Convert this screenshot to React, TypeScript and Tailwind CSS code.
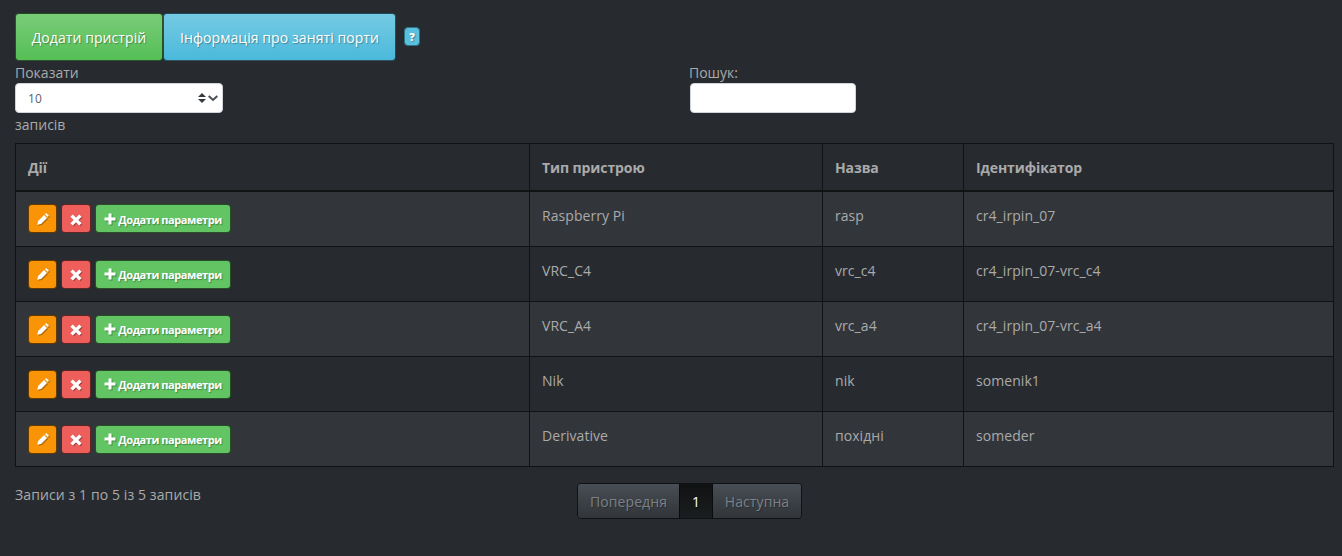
const shadow = "[text-shadow:1px_1px_1px_rgba(0,0,0,0.3)]";
const iconShadow = "[filter:drop-shadow(1px_1px_0.5px_rgba(0,0,0,0.3))]";

const rows = [
  { type: "Raspberry Pi", name: "rasp", id: "cr4_irpin_07" },
  { type: "VRC_C4", name: "vrc_c4", id: "cr4_irpin_07-vrc_c4" },
  { type: "VRC_A4", name: "vrc_a4", id: "cr4_irpin_07-vrc_a4" },
  { type: "Nik", name: "nik", id: "somenik1" },
  { type: "Derivative", name: "похідні", id: "someder" },
];

const action = "flex h-[29px] items-center justify-center rounded-[4px] border border-black/60 text-white";

function Pencil() {
  return (
    <svg width="12" height="12" viewBox="0 0 12 12" fill="currentColor" className={iconShadow}>
      <path d="M0.3 11.7 1.1 8 7.1 2 10 4.9 4 10.9ZM7.9 1.2 8.7.4Q9.2 0 9.7.4L11.6 2.3Q12 2.8 11.6 3.3L10.8 4.1Z" />
    </svg>
  );
}

function Cross() {
  return (
    <svg width="12" height="12" viewBox="0 0 12 12" fill="none" stroke="currentColor" strokeWidth="3.4" className={`mt-[2px] ${iconShadow}`}>
      <path d="M1.6 1.6 10.4 10.4M10.4 1.6 1.6 10.4" />
    </svg>
  );
}

function Plus() {
  return (
    <svg width="12" height="12" viewBox="0 0 12 12" fill="none" stroke="currentColor" strokeWidth="3" className={iconShadow}>
      <path d="M0.5 6H11.5M6 0.5V11.5" />
    </svg>
  );
}

export default function App() {
  return (
    <div className="h-[556px] w-[1342px] overflow-hidden bg-[#272b30] pl-[15px] pt-[13px] font-['Open_Sans','Noto_Sans',sans-serif] text-[14px] leading-[22px] text-[#aaaaaa]">
      <div className="flex h-12 items-center">
        <button className={`h-12 w-[148px] rounded-[4px] border border-black/60 bg-linear-to-b from-[#78cc78] to-[#55bf55] pt-px tracking-[0.08px] text-white ${shadow}`}>
          Додати пристрій
        </button>
        <button className={`h-12 w-[233px] rounded-[4px] border border-black/60 bg-linear-to-b from-[#74cae3] to-[#4ab9db] pt-px tracking-[0.08px] text-white ${shadow}`}>
          Інформація про заняті порти
        </button>
        <button className={`mb-px ml-2 h-[19px] w-4 rounded-[4px] border border-[#29778b] bg-[#5bc0de] text-[11px] font-extrabold leading-[17px] text-white ${shadow}`}>
          ?
        </button>
      </div>

      <div className="flex">
        <div className="w-[675px]">
          <div className="h-[22px] leading-[24px]">Показати</div>
          <div className="flex h-[30px] w-[208px] items-center rounded-[4px] border border-[#ced4da] bg-white pl-3 pr-1 text-[12px] text-[#5c6268]">
            <span className="flex-1 pt-px tracking-[0.2px]">10</span>
            <svg width="21" height="12" viewBox="0 0 21 12">
              <path d="M1 5 5 1 9 5ZM1 7 5 11 9 7Z" fill="#343a40" />
              <path d="m11.7 4 4.3 4 4.3-4" fill="none" stroke="#4a4f55" strokeWidth="2" />
            </svg>
          </div>
          <div className="h-[22px] leading-[24px]">записів</div>
        </div>
        <div>
          <div className="-ml-px h-[22px] leading-[24px]">Пошук:</div>
          <input className="block h-[30px] w-[166px] rounded-[4px] border border-[#ced4da] bg-white" />
        </div>
      </div>

      <table className="mt-[8px] w-[1319px] table-fixed border-collapse border border-[#101214] text-left">
        <colgroup>
          <col className="w-[514px]" />
          <col className="w-[293px]" />
          <col className="w-[141px]" />
          <col />
        </colgroup>
        <thead>
          <tr className="h-[47px] border-b-2 border-[#101214]">
            {["Дії", "Тип пристрою", "Назва", "Ідентифікатор"].map((h) => (
              <th key={h} className="border-r border-[#101214] px-3 pb-0 pt-[2px] font-bold tracking-[-0.1px]">{h}</th>
            ))}
          </tr>
        </thead>
        <tbody>
          {rows.map((r) => (
            <tr key={r.id} className="h-[55px] border-b border-[#101214] odd:bg-[#32353a] first:h-[56px]">
              <td className="border-r border-[#101214] px-3 py-0">
                <div className="flex">
                  <button className={`${action} w-[29px] bg-[#f89406]`}><Pencil /></button>
                  <button className={`${action} ml-1 w-[30px] bg-[#ee5f5b]`}><Cross /></button>
                  <button className={`${action} ml-1 w-[136px] gap-[2px] bg-[#62c462] text-[11px] font-bold tracking-[-0.42px] ${shadow}`}>
                    <Plus />
                    <span className="pt-[2px]">Додати параметри</span>
                  </button>
                </div>
              </td>
              {[r.type, r.name, r.id].map((v) => (
                <td key={v} className="border-r border-[#101214] px-3 pb-0 pt-[13px] align-top tracking-[0.06px]">{v}</td>
              ))}
            </tr>
          ))}
        </tbody>
      </table>

      <div className="flex pt-4">
        <div className="w-[562px] pt-px tracking-[0.1px]">Записи з 1 по 5 із 5 записів</div>
        <div className={`flex h-9 w-[225px] overflow-hidden rounded-[4px] border border-[#101214] text-[#7a8288] ${shadow}`}>
          <div className="flex w-[101px] items-center justify-center bg-linear-to-b from-[#484e55] to-[#313539] pt-px tracking-[0.1px]">Попередня</div>
          <div className="flex w-[34px] items-center justify-center border-x border-[#0a0b0c] bg-linear-to-b from-[#101112] to-[#1b1e20] pt-px text-white">1</div>
          <div className="flex flex-1 items-center justify-center bg-linear-to-b from-[#484e55] to-[#313539] pt-px tracking-[0.1px]">Наступна</div>
        </div>
      </div>
    </div>
  );
}
